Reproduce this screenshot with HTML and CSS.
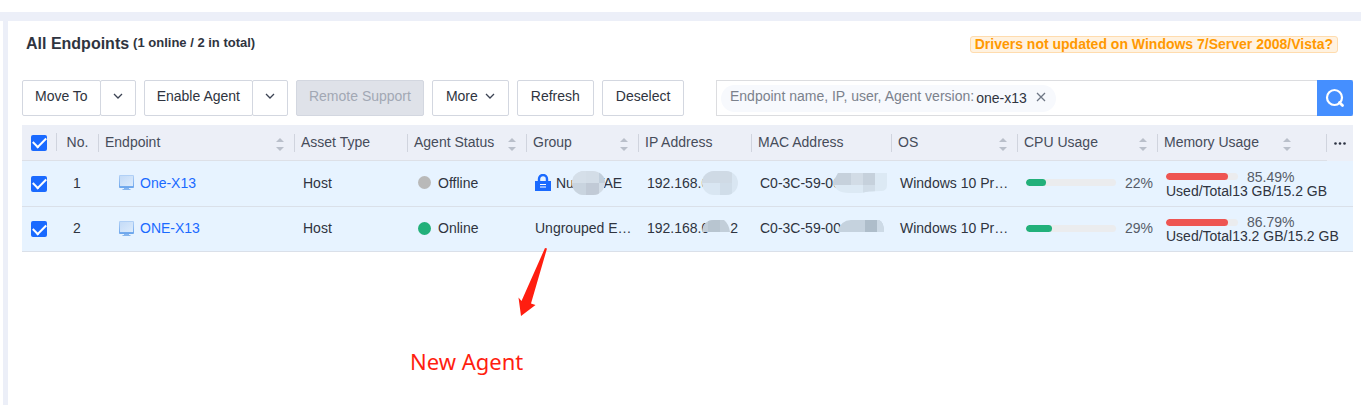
FILE: index.html
```html
<!DOCTYPE html>
<html lang="en">
<head>
<meta charset="utf-8">
<title>All Endpoints</title>
<link rel="stylesheet" href="styles.css">
</head>
<body>
<svg class="defs" aria-hidden="true">
  <defs>
    <linearGradient id="screen" x1="0" y1="0" x2="1" y2="1">
      <stop offset="0" stop-color="#c4dbf7"/><stop offset="1" stop-color="#dcebfc"/>
    </linearGradient>
    <linearGradient id="frame" x1="0" y1="0" x2="0" y2="1">
      <stop offset="0" stop-color="#b4d2f6"/><stop offset="1" stop-color="#6ba5ec"/>
    </linearGradient>
    <symbol id="chevron" viewBox="0 0 10 10"><path d="M1 3l4 4 4-4" fill="none" stroke="#3c4353" stroke-width="1.3"/></symbol>
    <symbol id="sort" viewBox="0 0 8 14"><path d="M0 5l4-4 4 4zM0 10h8l-4 4z" fill="#b9bfca"/></symbol>
    <symbol id="monitor" viewBox="0 0 15 15">
      <rect x="0" y="0" width="15" height="13" rx="1" fill="url(#frame)"/>
      <rect x="1" y="1" width="13" height="10" fill="url(#screen)"/>
      <path d="M5 13h5v1h1.500v1h-8v-1H5z" fill="#86b5ee"/>
    </symbol>
  </defs>
</svg>
<main class="panel">
  <header class="heading">
    <h1 class="title">All Endpoints <span class="count">(1 online / 2 in total)</span></h1>
    <a class="notice" href="#">Drivers not updated on Windows 7/Server 2008/Vista?</a>
  </header>
  <div class="toolbar">
    <div class="actions">
      <div class="split">
        <button class="btn">Move To</button>
        <button class="btn btn-arrow" aria-label="Move To options"><svg class="chevron"><use href="#chevron"/></svg></button>
      </div>
      <div class="split">
        <button class="btn">Enable Agent</button>
        <button class="btn btn-arrow" aria-label="Enable Agent options"><svg class="chevron"><use href="#chevron"/></svg></button>
      </div>
      <button class="btn" disabled>Remote Support</button>
      <button class="btn btn-wide">More<svg class="chevron"><use href="#chevron"/></svg></button>
      <button class="btn btn-wide">Refresh</button>
      <button class="btn btn-wide">Deselect</button>
    </div>
    <form class="search">
      <div class="tag">
        <label class="tag-name" for="query">Endpoint name, IP, user, Agent version:</label>
        <span class="tag-value">one-x13</span>
        <button class="tag-close" type="button" aria-label="Remove filter"><svg viewBox="0 0 10 10"><path d="M1 1l8 8M9 1l-8 8" fill="none" stroke="#6e7684" stroke-width="1.300"/></svg></button>
      </div>
      <input class="query" id="query" type="text">
      <button class="search-btn" type="button" aria-label="Search"><svg viewBox="0 0 20 20"><circle cx="9.500" cy="9.500" r="7.500" fill="none" stroke="#fff" stroke-width="2.200"/><path d="M14.500 14.500l3 3" stroke="#fff" stroke-width="2.800" stroke-linecap="round"/></svg></button>
    </form>
  </div>
  <table class="grid">
    <colgroup>
      <col class="c-check"><col class="c-no"><col><col class="c-type"><col class="c-status"><col class="c-group"><col class="c-ip"><col class="c-mac"><col class="c-os"><col class="c-cpu"><col class="c-mem"><col class="c-menu">
    </colgroup>
    <thead>
      <tr>
        <th class="check"><input class="tick" type="checkbox" checked aria-label="Select all"></th>
        <th class="no"><div class="head">No.</div></th>
        <th><div class="head">Endpoint<svg class="sort"><use href="#sort"/></svg></div></th>
        <th><div class="head">Asset Type</div></th>
        <th><div class="head">Agent Status<svg class="sort"><use href="#sort"/></svg></div></th>
        <th><div class="head">Group<svg class="sort"><use href="#sort"/></svg></div></th>
        <th><div class="head">IP Address</div></th>
        <th><div class="head">MAC Address</div></th>
        <th><div class="head">OS<svg class="sort"><use href="#sort"/></svg></div></th>
        <th><div class="head">CPU Usage<svg class="sort"><use href="#sort"/></svg></div></th>
        <th><div class="head mem-head">Memory Usage<svg class="sort"><use href="#sort"/></svg></div></th>
        <th class="menu"><button class="dots" aria-label="Columns"><svg viewBox="0 0 12 3"><circle cx="1.500" cy="1.500" r="1.300" fill="#2c3242"/><circle cx="6" cy="1.500" r="1.300" fill="#2c3242"/><circle cx="10.500" cy="1.500" r="1.300" fill="#2c3242"/></svg></button></th>
      </tr>
    </thead>
    <tbody>
      <tr>
        <td class="check"><input class="tick" type="checkbox" checked aria-label="Select One-X13"></td>
        <td class="no">1</td>
        <td class="name"><a class="link" href="#"><svg class="monitor"><use href="#monitor"/></svg>One-X13</a></td>
        <td>Host</td>
        <td><div class="status"><span class="dot offline"></span>Offline</div></td>
        <td><div class="masked">
          <svg class="lock" viewBox="0 0 16 17"><path d="M4 8V5a4 4 0 0 1 8 0v3" fill="none" stroke="#1a6aff" stroke-width="2.400"/><path d="M0 7h16v10H0z" fill="#1a6aff"/><path d="M5 10h6v1H5zM5 12.500h6v1H5z" fill="#fff"/></svg>
          <span>Nu</span>
          <svg class="mask m-group" viewBox="0 0 33 24"><clipPath id="k1"><rect width="33" height="24" rx="12"/></clipPath><g clip-path="url(#k1)"><path d="M0 0h33v24H0z" fill="#d3dde7"/><path d="M0 0h14v12H0z" fill="#d5dfe9"/><path d="M0 12h14v12H0z" fill="#c9d4df"/><path d="M14 12h13v12H14z" fill="#c1cad6"/><path d="M27 0h6v12h-6z" fill="#c2cfdc"/></g></svg>
          <span class="tail">TAE</span></div></td>
        <td><div class="masked"><span>192.168.0</span><svg class="mask m-ip" viewBox="0 0 36 24"><clipPath id="k2"><rect width="36" height="24" rx="12"/></clipPath><g clip-path="url(#k2)"><path d="M0 0h36v24H0z" fill="#d9e6f2"/><path d="M0 0h30v12H0z" fill="#cfdae5"/><path d="M18 12h12v12H18z" fill="#d0dde9"/></g></svg></div></td>
        <td><div class="masked"><span>C0-3C-59-00</span><svg class="mask m-mac" viewBox="0 0 54 20"><clipPath id="k3"><path d="M5 0h49v12q0 6-6 6-14 0-20 2H16Q2 20 0 9z"/></clipPath><g clip-path="url(#k3)"><path d="M0 0h54v20H0z" fill="#dce9f4"/><path d="M0 0h42v12H0z" fill="#c6d1dc"/><path d="M18 0h12v12H18z" fill="#d2dce6"/><path d="M30 12h12v8H30z" fill="#d1dde8"/></g></svg></div></td>
        <td>Windows 10 Pr…</td>
        <td><div class="usage"><span class="bar cpu"><span class="fill green" style="width:22%"></span></span><span class="pct">22%</span></div></td>
        <td class="full" colspan="2"><div class="memory"><div class="usage"><span class="bar mem"><span class="fill red" style="width:85.49%"></span></span><span class="pct">85.49%</span></div><div>Used/Total13 GB/15.2 GB</div></div></td>
      </tr>
      <tr>
        <td class="check"><input class="tick" type="checkbox" checked aria-label="Select ONE-X13"></td>
        <td class="no">2</td>
        <td class="name"><a class="link" href="#"><svg class="monitor"><use href="#monitor"/></svg>ONE-X13</a></td>
        <td>Host</td>
        <td><div class="status"><span class="dot online"></span>Online</div></td>
        <td>Ungrouped E…</td>
        <td><div class="masked high"><span>192.168.0</span><svg class="mask m-ip2" viewBox="0 0 28 12"><clipPath id="k4"><path d="M0 12Q1 0 12 0h10q5 4 6 12z"/></clipPath><g clip-path="url(#k4)"><path d="M0 0h28v12H0z" fill="#c2ced9"/><path d="M6 0h12v12H6z" fill="#b8c5d0"/></g></svg><span>2</span></div></td>
        <td><div class="masked high"><span>C0-3C-59-00</span><svg class="mask m-mac2" viewBox="0 0 47 12"><clipPath id="k5"><path d="M0 12Q4 0 14 0h28q5 2 5 12z"/></clipPath><g clip-path="url(#k5)"><path d="M0 0h47v12H0z" fill="#c5d2de"/><path d="M28 0h12v12H28z" fill="#aebdca"/><path d="M40 0h7v12h-7z" fill="#cddae6"/></g></svg></div></td>
        <td>Windows 10 Pr…</td>
        <td><div class="usage"><span class="bar cpu"><span class="fill green" style="width:29%"></span></span><span class="pct">29%</span></div></td>
        <td class="full" colspan="2"><div class="memory"><div class="usage"><span class="bar mem"><span class="fill red" style="width:86.79%"></span></span><span class="pct">86.79%</span></div><div>Used/Total13.2 GB/15.2 GB</div></div></td>
      </tr>
    </tbody>
  </table>
  <div class="note">
    <svg class="note-arrow" viewBox="0 0 30 68"><path d="M28 0L30 0.500 14 55.500 18.500 57 4 68 1.500 49.500 4.500 53z" fill="#ff1e10"/></svg>
    <span class="note-text">New Agent</span>
  </div>
</main>
</body>
</html>
```
FILE: styles.css
```css
* { box-sizing: border-box; }
body {
  margin: 0;
  min-height: 100vh;
  display: flex;
  flex-direction: column;
  border-top: 12px solid #fff;
  background: #eceff8;
  color: #2f3440;
  font: 14px/16px "Liberation Sans", Arial, sans-serif;
}
button, input { font: inherit; color: inherit; }
svg { display: block; flex: none; }
.defs { position: absolute; width: 0; height: 0; }
.panel {
  position: relative;
  flex: 1;
  margin: 9px 0 0 3px;
  padding: 12px 8px 0 14px;
  border-left: 5px solid #eceff8;
  background: #fff;
  box-shadow: -3px 0 #fff;
}
.heading {
  display: flex;
  justify-content: space-between;
  align-items: center;
  height: 22px;
  padding: 0 15px 0 4px;
}
.title { display: flex; gap: 4px; margin: 0; font-size: 16px; line-height: 20px; }
.count { font-size: 13px; line-height: 18px; }
.notice {
  padding: 0 4px;
  border: 1px solid #ffdcae;
  border-radius: 3px;
  background: #fff2e0;
  color: #ff9900;
  font-weight: bold;
  line-height: 15px;
  text-decoration: none;
}
.toolbar {
  display: flex;
  justify-content: space-between;
  gap: 20px;
  margin: 25px 0 9px;
}
.actions { display: flex; gap: 8px; }
.split { display: flex; }
.btn {
  display: flex;
  align-items: center;
  gap: 7px;
  height: 36px;
  padding: 0 12px 4px;
  border: 1px solid #d3d7e0;
  border-radius: 2px;
  background: #fff;
  white-space: nowrap;
}
.btn:disabled { background: #dfe2e9; color: #a2a8b4; }
.btn-arrow { margin-left: -1px; }
.btn-wide { padding: 0 13px 4px; }
.chevron { width: 10px; height: 10px; }
.search { display: flex; flex: 0 1 637px; height: 36px; border: 1px solid #dcdde0; border-right: 0; }
.tag {
  display: flex;
  align-items: center;
  gap: 2px;
  height: 27px;
  margin: 4px 0 0 4px;
  padding: 0 10px 0 9px;
  border-radius: 14px;
  background: #f7f9fd;
  white-space: nowrap;
}
.tag-name { padding-bottom: 6px; color: #7b818c; }
.tag-value { padding-bottom: 2px; }
.tag-close { width: 10px; height: 10px; margin: 0 0 3px 7px; padding: 0; border: 0; background: none; }
.query { flex: 1; min-width: 0; border: 0; outline: 0; background: none; }
.search-btn {
  display: grid;
  place-items: center;
  width: 36px;
  margin: -1px 0;
  padding: 0;
  border: 0;
  border-radius: 0 2px 2px 0;
  background: #458fff;
}
.search-btn svg { width: 20px; height: 20px; }

.grid { width: 100%; table-layout: fixed; border-collapse: separate; border-spacing: 0; }
.c-check { width: 35px; }
.c-no { width: 42px; }
.c-type, .c-ip { width: 113px; }
.c-status { width: 119px; }
.c-group { width: 112px; }
.c-mac, .c-cpu { width: 140px; }
.c-os { width: 126px; }
.c-mem { width: 169px; }
.c-menu { width: 26px; }
th {
  height: 36px;
  padding: 0;
  border-bottom: 1px solid #dde0e7;
  background: #eceff7;
  color: #464c5a;
  font-weight: normal;
  text-align: left;
}
.head {
  display: flex;
  justify-content: space-between;
  align-items: center;
  height: 18px;
  padding: 0 10px 2px 6px;
  border-right: 1px solid #d0d4de;
}
th.check { background: linear-gradient(#d0d4de, #d0d4de) right 8px / 1px 18px no-repeat #eceff7; }
th .sort { width: 8px; height: 14px; margin-top: 4px; }
.mem-head { padding-right: 35px; }
.no .head { justify-content: center; padding: 0 0 2px; }
.menu { border-bottom-color: #eceff7; }
.dots { display: block; width: 26px; height: 18px; padding: 1px 7px 0; border: 0; background: none; }
.dots svg { width: 12px; height: 3px; }
td {
  height: 46px;
  padding: 0 0 2px 8px;
  border-bottom: 1px solid #dae0e9;
  background: #e7f3ff;
  white-space: nowrap;
}
tr:last-child td { height: 45px; }
td.full { padding-bottom: 0; }
td.no { padding: 0 2px 2px 0; text-align: center; }
th.check, td.check { padding: 0 0 0 9px; }
.tick {
  display: grid;
  place-items: center;
  appearance: none;
  width: 16px;
  height: 16px;
  margin: 0;
  border-radius: 2px;
  background: #1a6aff;
}
.tick::before {
  content: "";
  width: 11px;
  height: 6px;
  margin-bottom: 3px;
  border: solid #fff;
  border-width: 0 0 2px 2px;
  transform: rotate(-45deg);
}
td.name { padding-left: 20px; }
.link { display: flex; align-items: center; gap: 6px; color: #1a6aff; text-decoration: none; }
.monitor { width: 15px; height: 15px; }
.status { display: flex; align-items: center; gap: 7px; padding-left: 2px; }
.dot { width: 13px; height: 13px; border-radius: 50%; }
.offline { background: #b9b9b9; }
.online { background: #22b07a; }
.masked { display: flex; align-items: center; }
.high { align-items: flex-start; }
.lock { width: 16px; height: 17px; margin-right: 5px; }
.mask { z-index: 1; height: 24px; }
.m-group { width: 33px; margin-left: -2px; }
.tail { margin-left: -9px; }
.m-ip { width: 36px; margin-left: -7px; }
.m-mac { width: 54px; height: 20px; margin-left: -8px; }
.m-ip2 { width: 28px; height: 12px; margin-left: -7px; }
.m-mac2 { width: 47px; height: 12px; margin-left: -4px; }
.usage { display: flex; align-items: center; gap: 9px; }
.bar { height: 7px; border-radius: 4px; background: #ebecee; overflow: hidden; }
.cpu { width: 90px; }
.mem { width: 72px; }
.fill { display: block; height: 100%; border-radius: 4px; }
.green { background: #22b07a; }
.red { background: #ee5552; }
.pct { color: #565c68; }
.memory { line-height: 14px; }

.note { position: absolute; left: 402px; top: 227px; width: 140px; color: #ff1e10; }
.note-arrow { width: 30px; height: 68px; margin-left: 107px; }
.note-text {
  display: block;
  margin-top: 30px;
  font: 22px/30px "Noto Sans", "Open Sans", sans-serif;
}
```
